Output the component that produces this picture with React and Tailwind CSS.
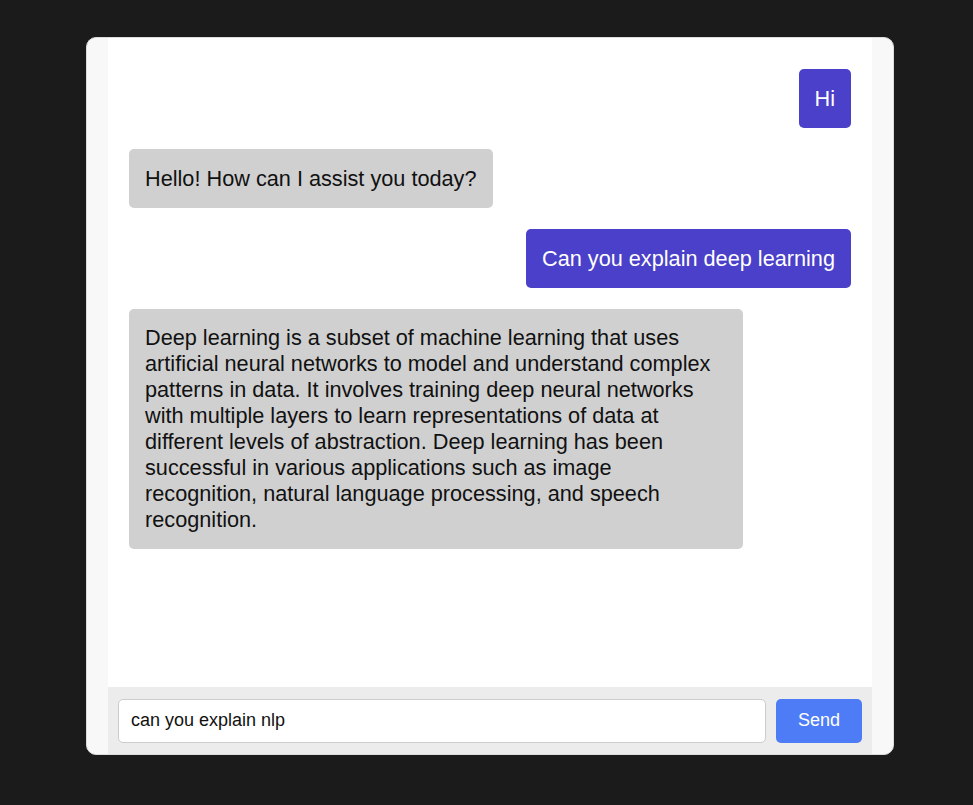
export default function App() {
  const font = { fontFamily: '"Liberation Sans", Arial, sans-serif' };
  return (
    <div className="min-h-[805px] w-full bg-[#1b1b1b] pt-[37px]" style={font}>
      <div className="ml-[86px] flex h-[718px] w-[808px] flex-col rounded-[10px] border border-[#dcdcdc] bg-[#f8f8f8] px-[21px]">
        <div className="flex flex-1 flex-col gap-[21px] bg-white px-[21px] pt-[31px]">
          <div className="self-end rounded-[5px] bg-[#4a40c9] px-4 py-4 text-[21.7px] leading-[27px] text-white">Hi</div>
          <div className="self-start rounded-[5px] bg-[#d0d0d0] px-4 py-4 text-[21.7px] leading-[27px] text-[#111]">Hello! How can I assist you today?</div>
          <div className="self-end rounded-[5px] bg-[#4a40c9] px-4 py-4 text-[21.7px] leading-[27px] text-white">Can you explain deep learning</div>
          <div className="w-[614px] self-start rounded-[5px] bg-[#d0d0d0] px-4 py-4 text-[21.7px] leading-[26px] text-[#111]">
            Deep learning is a subset of machine learning that uses artificial neural networks to model and understand complex patterns in data. It involves training deep neural networks with multiple layers to learn representations of data at different levels of abstraction. Deep learning has been successful in various applications such as image recognition, natural language processing, and speech recognition.
          </div>
        </div>
        <div className="flex h-[67px] items-center gap-[10px] bg-[#ececec] px-[10px]">
          <input
            className="h-[44px] flex-1 rounded-[5px] border border-[#ccc] bg-white px-3 text-[18px] text-[#111] outline-none"
            defaultValue="can you explain nlp"
            style={font}
          />
          <button className="h-[44px] w-[86px] rounded-[5px] bg-[#4d7cf6] text-[18px] text-white" style={font}>Send</button>
        </div>
      </div>
    </div>
  );
}
